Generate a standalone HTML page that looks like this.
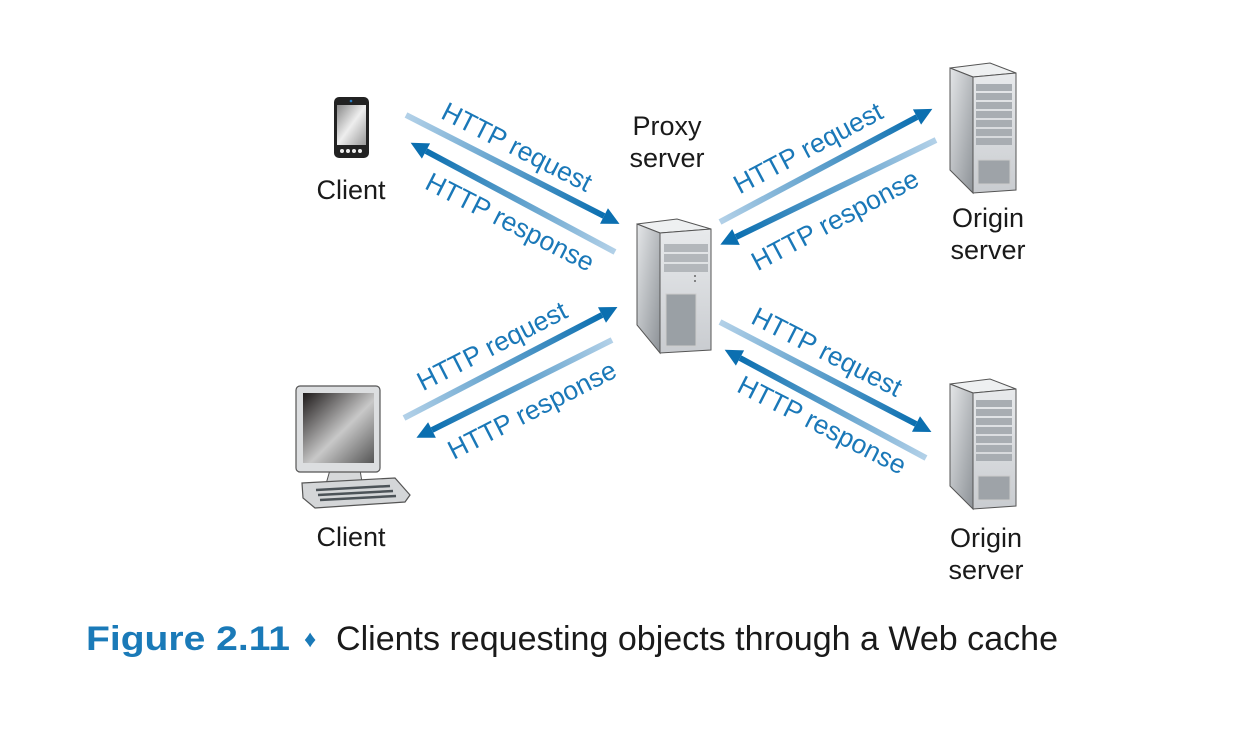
<!DOCTYPE html>
<html><head><meta charset="utf-8"><style>html,body{margin:0;padding:0;background:#fff;}svg{display:block}</style></head>
<body>
<svg width="1237" height="755" viewBox="0 0 1237 755" xmlns="http://www.w3.org/2000/svg" font-family="Liberation Sans, sans-serif">
<defs>
<marker id="h" markerUnits="strokeWidth" markerWidth="3.4" markerHeight="2.9" refX="0" refY="5" viewBox="0 0 10 10" orient="auto"><path d="M0,0 L10,5 L0,10 z" fill="#0b6fb0"/></marker>
<linearGradient id="g1" gradientUnits="userSpaceOnUse" x1="406" y1="115" x2="604" y2="216"><stop offset="0" stop-color="#b3d1e8"/><stop offset="1" stop-color="#0b6fb0"/></linearGradient>
<linearGradient id="g2" gradientUnits="userSpaceOnUse" x1="615" y1="252" x2="426" y2="151"><stop offset="0" stop-color="#b3d1e8"/><stop offset="1" stop-color="#0b6fb0"/></linearGradient>
<linearGradient id="g3" gradientUnits="userSpaceOnUse" x1="720" y1="222" x2="917" y2="117"><stop offset="0" stop-color="#b3d1e8"/><stop offset="1" stop-color="#0b6fb0"/></linearGradient>
<linearGradient id="g4" gradientUnits="userSpaceOnUse" x1="936" y1="140" x2="736" y2="237"><stop offset="0" stop-color="#b3d1e8"/><stop offset="1" stop-color="#0b6fb0"/></linearGradient>
<linearGradient id="g5" gradientUnits="userSpaceOnUse" x1="404" y1="418" x2="602" y2="315"><stop offset="0" stop-color="#b3d1e8"/><stop offset="1" stop-color="#0b6fb0"/></linearGradient>
<linearGradient id="g6" gradientUnits="userSpaceOnUse" x1="612" y1="340" x2="432" y2="430"><stop offset="0" stop-color="#b3d1e8"/><stop offset="1" stop-color="#0b6fb0"/></linearGradient>
<linearGradient id="g7" gradientUnits="userSpaceOnUse" x1="720" y1="322" x2="916" y2="424"><stop offset="0" stop-color="#b3d1e8"/><stop offset="1" stop-color="#0b6fb0"/></linearGradient>
<linearGradient id="g8" gradientUnits="userSpaceOnUse" x1="926" y1="458" x2="740" y2="358"><stop offset="0" stop-color="#b3d1e8"/><stop offset="1" stop-color="#0b6fb0"/></linearGradient>
<linearGradient id="side" x1="0" y1="0" x2="1" y2="1"><stop offset="0" stop-color="#e4e6e8"/><stop offset="1" stop-color="#8d9297"/></linearGradient>
<linearGradient id="front" x1="0" y1="0" x2="0" y2="1"><stop offset="0" stop-color="#e8eaec"/><stop offset="1" stop-color="#c9ccd0"/></linearGradient>
<linearGradient id="scr" x1="0" y1="0" x2="1" y2="1"><stop offset="0" stop-color="#1e1a1a"/><stop offset="0.55" stop-color="#c8c8c8"/><stop offset="1" stop-color="#555"/></linearGradient>
<linearGradient id="ph" x1="0" y1="0" x2="1" y2="1"><stop offset="0" stop-color="#888"/><stop offset="0.5" stop-color="#eee"/><stop offset="1" stop-color="#999"/></linearGradient>
</defs>

<g stroke-width="6" fill="none" marker-end="url(#h)">
<line x1="406" y1="115" x2="604" y2="216" stroke="url(#g1)"/>
<line x1="615" y1="252" x2="426" y2="151" stroke="url(#g2)"/>
<line x1="720" y1="222" x2="917" y2="117" stroke="url(#g3)"/>
<line x1="936" y1="140" x2="736" y2="237" stroke="url(#g4)"/>
<line x1="404" y1="418" x2="602" y2="315" stroke="url(#g5)"/>
<line x1="612" y1="340" x2="432" y2="430" stroke="url(#g6)"/>
<line x1="720" y1="322" x2="916" y2="424" stroke="url(#g7)"/>
<line x1="926" y1="458" x2="740" y2="358" stroke="url(#g8)"/>
</g>

<g fill="#1a78b8" font-size="26.5" text-anchor="middle" dominant-baseline="central">
<text transform="translate(517,147) rotate(27)">HTTP request</text>
<text transform="translate(510,222) rotate(27)">HTTP response</text>
<text transform="translate(808,148) rotate(-28)">HTTP request</text>
<text transform="translate(835,220) rotate(-28)">HTTP response</text>
<text transform="translate(492,346) rotate(-27)">HTTP request</text>
<text transform="translate(532,410) rotate(-27)">HTTP response</text>
<text transform="translate(827,352) rotate(27)">HTTP request</text>
<text transform="translate(822,425) rotate(27)">HTTP response</text>
</g>

<!-- phone -->
<rect x="334" y="97" width="35" height="61" rx="5" fill="#222"/>
<rect x="337" y="105" width="29" height="40" fill="url(#ph)"/>
<circle cx="351" cy="101" r="1.3" fill="#2a7bc0"/>
<g fill="#eee"><circle cx="342" cy="151" r="2"/><circle cx="348" cy="151" r="2"/><circle cx="354" cy="151" r="2"/><circle cx="360" cy="151" r="2"/></g>

<!-- monitor -->
<polygon points="330,470 360,470 362,482 326,484" fill="#d6d8da" stroke="#555" stroke-width="1"/>
<rect x="296" y="386" width="84" height="86" rx="4" fill="#dcdee0" stroke="#555" stroke-width="1.2"/>
<rect x="303" y="393" width="71" height="70" fill="url(#scr)"/>
<polygon points="302,483 395,478 410,495 405,502 315,508 303,498" fill="#d4d6d8" stroke="#555" stroke-width="1.2"/>
<g stroke="#4c5358" stroke-width="2.5"><line x1="316" y1="490" x2="390" y2="486"/><line x1="318" y1="495" x2="393" y2="491"/><line x1="320" y1="500" x2="396" y2="496"/></g>

<!-- proxy server -->
<g stroke="#555" stroke-width="1">
<polygon points="637,224 677,219 711,229 660,233" fill="#eef0f1"/>
<polygon points="637,224 660,233 660,353 637,325" fill="url(#side)"/>
<polygon points="660,233 711,229 711,350 660,353" fill="url(#front)"/>
</g>
<g fill="#b3b7bb"><rect x="664" y="244" width="44" height="8"/><rect x="664" y="254" width="44" height="8"/><rect x="664" y="264" width="44" height="8"/></g>
<rect x="666" y="294" width="30" height="52" fill="#9aa0a5" stroke="#ccc"/>
<circle cx="695" cy="276" r="1" fill="#666"/><circle cx="695" cy="281" r="1" fill="#666"/>

<!-- origin servers -->
<g id="os">
<g stroke="#555" stroke-width="1">
<polygon points="950,68 990,63 1016,73 973,77" fill="#eef0f1"/>
<polygon points="950,68 973,77 973,193 950,170" fill="url(#side)"/>
<polygon points="973,77 1016,73 1016,190 973,193" fill="url(#front)"/>
</g>
<g fill="#a8adb2">
<rect x="976" y="84" width="36" height="7"/><rect x="976" y="93" width="36" height="7"/><rect x="976" y="102" width="36" height="7"/><rect x="976" y="111" width="36" height="7"/><rect x="976" y="120" width="36" height="7"/><rect x="976" y="129" width="36" height="7"/><rect x="976" y="138" width="36" height="7"/>
</g>
<rect x="978" y="160" width="32" height="24" fill="#9ea3a8" stroke="#ccc"/>
</g>
<use href="#os" transform="translate(0,316)"/>

<g fill="#1a1a1a" font-size="27" text-anchor="middle">
<text x="351" y="199">Client</text>
<text x="351" y="546">Client</text>
<text x="667" y="135">Proxy</text>
<text x="667" y="167">server</text>
<text x="988" y="227">Origin</text>
<text x="988" y="259">server</text>
<text x="986" y="547">Origin</text>
<text x="986" y="579">server</text>
</g>

<text x="86" y="650" font-size="34" font-weight="bold" fill="#1a7ab8" textLength="204" lengthAdjust="spacingAndGlyphs">Figure 2.11</text>
<text x="304" y="647" font-size="24" fill="#1a7ab8">♦</text>
<text x="336" y="650" font-size="34" fill="#1a1a1a" textLength="722" lengthAdjust="spacingAndGlyphs">Clients requesting objects through a Web cache</text>
</svg>
</body></html>
